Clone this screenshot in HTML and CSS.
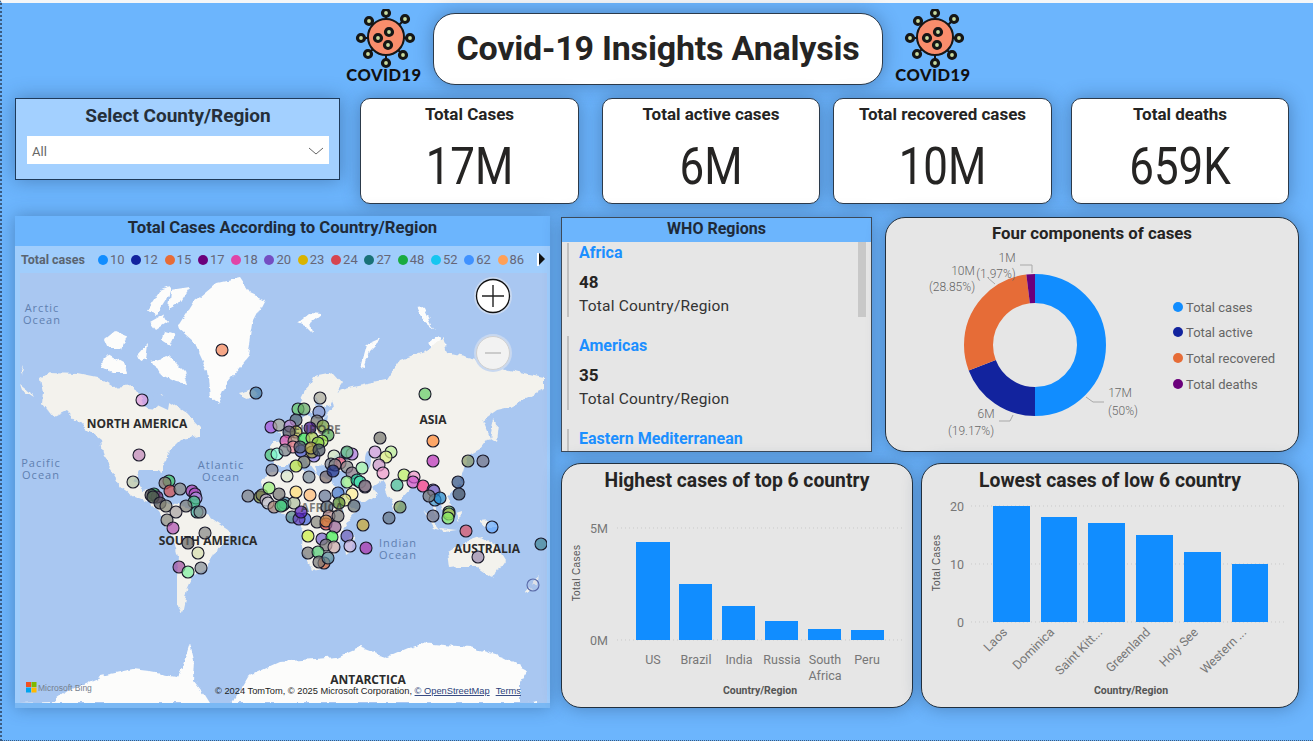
FILE: index.html
```html
<!DOCTYPE html>
<html lang="en">
<head>
<meta charset="utf-8">
<title>Covid-19 Insights Analysis</title>
<link rel="stylesheet" href="styles.css">
</head>
<body>
<svg class="defs" width="0" height="0" aria-hidden="true">
  <symbol id="virus" viewBox="0 0 66 62">
    <g class="v-stalk">
      <path d="M37 4V16M56 10L49 17M61 29H51M54 46L48 40M37 54V45M19 45L25 39M12 29H22M20 12L27 18"/>
    </g>
    <circle class="v-body" cx="37" cy="28" r="18"/>
    <g class="v-ball">
      <circle cx="37" cy="4" r="3.500"/><circle cx="56" cy="10" r="3.500"/><circle cx="61" cy="29" r="3.500"/><circle cx="54" cy="46" r="3.500"/>
      <circle cx="37" cy="54" r="3.500"/><circle cx="19" cy="45" r="3.500"/><circle cx="12" cy="29" r="3.500"/><circle cx="20" cy="12" r="3.500"/>
      <circle cx="40" cy="23" r="3.500"/><circle cx="29" cy="29" r="3.500"/><circle cx="39" cy="36" r="3.500"/>
    </g>
  </symbol>
  <filter id="coast" x="-5%" y="-5%" width="110%" height="110%">
    <feTurbulence type="fractalNoise" baseFrequency="0.09" numOctaves="3" seed="7"/>
    <feDisplacementMap in="SourceGraphic" scale="7" xChannelSelector="R" yChannelSelector="G"/>
    <feGaussianBlur stdDeviation="0.35"/>
  </filter>
</svg>
<div class="page">
  <header class="header">
    <div class="logo"><svg class="logo-icon"><use href="#virus"/></svg><span class="logo-text">COVID19</span></div>
    <h1 class="title-box">Covid-19 Insights Analysis</h1>
    <div class="logo logo-right"><svg class="logo-icon"><use href="#virus"/></svg><span class="logo-text">COVID19</span></div>
  </header>

  <section class="kpi-row">
    <div class="slicer">
      <div class="slicer-title">Select County/Region</div>
      <div class="dropdown"><span>All</span>
        <svg class="chev" width="16" height="8" viewBox="0 0 16 8"><path d="M1 1L8 7L15 1"/></svg>
      </div>
    </div>
    <div class="kpi kpi-a"><div class="kpi-title">Total Cases</div><div class="kpi-value">17M</div></div>
    <div class="kpi kpi-b"><div class="kpi-title">Total active cases</div><div class="kpi-value">6M</div></div>
    <div class="kpi kpi-c"><div class="kpi-title">Total recovered cases</div><div class="kpi-value">10M</div></div>
    <div class="kpi kpi-d"><div class="kpi-title">Total deaths</div><div class="kpi-value">659K</div></div>
  </section>

  <section class="main-row">
    <div class="map-panel">
      <div class="map-title">Total Cases According to Country/Region</div>
      <div class="legend">
        <b class="legend-name">Total cases</b>
        <span class="lg"><i class="c1"></i>10</span><span class="lg"><i class="c2"></i>12</span><span class="lg"><i class="c3"></i>15</span><span class="lg"><i class="c4"></i>17</span><span class="lg"><i class="c5"></i>18</span><span class="lg"><i class="c6"></i>20</span><span class="lg"><i class="c7"></i>23</span><span class="lg"><i class="c8"></i>24</span><span class="lg"><i class="c9"></i>27</span><span class="lg"><i class="c10"></i>48</span><span class="lg"><i class="c11"></i>52</span><span class="lg"><i class="c12"></i>62</span><span class="lg"><i class="c13"></i>86</span>
        <span class="legend-next"></span>
      </div>
      <svg class="map" width="527" height="430" viewBox="20 273 527 430">
        <rect class="ocean" x="20" y="273" width="527" height="430"/>
        <g class="ice" filter="url(#coast)">
          <path d="M178 327L193 303L217 283L240 278L250 293L265 300L253 323L248 357L227 383L218 403L210 397L207 370L193 340Z"/>
          <path d="M20 703L53 702L70 690L100 677L133 670L150 672L177 677L183 665L190 643L194 660L193 680L205 695L210 703Z"/>
          <path d="M232 703L247 677L280 662L303 660L337 657L360 647L387 657L420 643L470 647L503 657L528 670L520 683L520 703Z"/>
          <path d="M527 703L538 701L538 703Z"/>
          <path d="M298 322L308 314L320 315L311 322L313 333L305 325Z"/>
          <path d="M360 367L366 345L382 338L370 350L364 368Z"/>
          <path d="M417 307L423 306L432 325L436 330L424 320ZM427 342L436 335L447 345L436 349Z"/>
          <path d="M147 310L160 290L170 286L166 300L156 316ZM170 290L190 287L180 303L168 310ZM150 322L164 314L168 322L156 330Z"/>
          <path d="M104 340L115 331L127 336L122 349L108 349ZM100 362L108 354L124 363L127 372L112 372L102 367Z"/>
          <path d="M152 360L168 356L184 372L188 384L176 382L160 374ZM136 356L148 343L146 360L139 362ZM165 332L175 335L170 345L162 340Z"/>
        </g>
        <g class="land" filter="url(#coast)">
          <path d="M42 403L43 393L40 378L50 372L77 373L97 377L113 387L133 385L140 395L147 407L157 408L160 396L170 402L187 413L200 427L200 437L180 440L170 450L163 467L163 473L157 470L140 470L133 483L143 490L150 489L147 497L165 510L160 512L150 503L135 497L122 488L113 473L103 457L100 440L83 427L67 410L53 417Z"/>
          <path d="M157 503L177 505L200 510L217 522L232 532L223 545L213 553L207 568L193 577L187 590L182 613L177 603L177 577L178 557L173 537L163 523Z"/>
          <path d="M270 450L274 442L287 441L286 432L297 424L306 416L320 420L328 412L334 405L330 395L342 390L353 387L387 380L400 360L427 350L443 337L447 353L477 360L510 370L544 377L544 390L523 400L510 407L497 410L483 420L490 437L480 450L467 457L463 473L457 487L448 497L452 507L443 510L440 500L434 498L437 514L442 522L434 510L428 495L420 490L412 487L403 497L396 512L388 495L382 480L372 487L378 494L365 503L352 500L345 482L350 470L337 470L325 465L315 466L318 476L305 458L296 462L287 465L275 465L270 458Z"/>
          <path d="M300 403L313 377L333 373L342 383L336 392L330 405L322 408L317 395L312 413L303 414Z"/>
          <path d="M260 480L273 473L300 470L323 477L337 487L345 502L357 510L340 533L337 550L323 568L312 570L302 547L303 530L297 517L277 513L263 490Z"/>
          <path d="M350 537L355 535L352 552L346 556L345 547Z"/>
          <path d="M448 552L463 543L480 537L497 547L505 560L493 578L477 567L457 567L450 568Z"/>
          <path d="M480 522L490 521L497 527L486 527Z"/>
          <path d="M423 510L430 517L440 530L434 528ZM445 510L452 512L451 522L444 520ZM440 528L458 530L444 532ZM455 513L461 511L460 522Z"/>
          <path d="M525 593L530 587L533 590ZM532 583L540 576L536 586Z"/>
          <path d="M490 437L494 420L498 425L496 441ZM458 485L461 476L463 485Z"/>
          <path d="M284 437L290 424L296 430L294 440ZM278 432L283 430L282 438Z"/>
          <path d="M240 392L252 389L258 395L246 398Z"/>
          <path d="M20 372L23 365L22 376ZM20 384L30 392L33 397L22 390Z"/>
        </g>
        <g class="seas">
          <ellipse cx="342" cy="457" rx="8" ry="3.500"/>
          <ellipse cx="368" cy="460" rx="3" ry="9"/>
          <path d="M152 392L170 398L168 410L155 404Z"/>
          <path d="M318 424L328 415L326 428Z"/>
        </g>
        <g class="ocean-lb">
          <text x="42" y="312">Arctic</text><text x="42" y="324">Ocean</text>
          <text x="41" y="467">Pacific</text><text x="41" y="479">Ocean</text>
          <text x="221" y="469">Atlantic</text><text x="221" y="481">Ocean</text>
          <text x="398" y="547">Indian</text><text x="398" y="559">Ocean</text>
        </g>
        <g class="land-lb">
          <text x="137" y="428">NORTH AMERICA</text>
          <text x="433" y="424">ASIA</text>
          <text x="208" y="545">SOUTH AMERICA</text>
          <text x="487" y="553">AUSTRALIA</text>
          <text x="368" y="684">ANTARCTICA</text>
        </g>
        <g class="dots">
          <circle cx="222" cy="350" fill="#f4865a"/><circle cx="256" cy="393" fill="#4a7fa8"/><circle cx="142" cy="400" fill="#dd99dd"/><circle cx="139" cy="455" fill="#c088b8"/><circle cx="133" cy="482" fill="#b5c4a8"/>
          <circle cx="169" cy="481" fill="#3fc060"/><circle cx="165" cy="483" fill="#8a7a6a"/><circle cx="170" cy="491" fill="#d05050"/><circle cx="180" cy="489" fill="#888880"/>
          <circle cx="192" cy="491" fill="#b040b0"/><circle cx="195" cy="494" fill="#b050c0"/><circle cx="196" cy="498" fill="#b090e0"/><circle cx="194" cy="502" fill="#40c080"/><circle cx="197" cy="512" fill="#3cb0a0"/><circle cx="200" cy="512" fill="#889090"/><circle cx="186" cy="506" fill="#808078"/>
          <circle cx="154" cy="494" fill="#30c050"/><circle cx="157" cy="497" fill="#773377"/><circle cx="151" cy="495" fill="#444444"/><circle cx="153" cy="497" fill="#556655"/><circle cx="160" cy="503" fill="#555555"/><circle cx="166" cy="506" fill="#888877"/><circle cx="176" cy="512" fill="#aaa4a4"/>
          <circle cx="167" cy="520" fill="#888880"/><circle cx="173" cy="528" fill="#b050b0"/><circle cx="205" cy="533" fill="#888888"/><circle cx="188" cy="543" fill="#666666"/><circle cx="198" cy="553" fill="#d8dfb0"/><circle cx="179" cy="567" fill="#a050a0"/><circle cx="188" cy="572" fill="#80f0a0"/><circle cx="201" cy="568" fill="#889098"/>
          <circle cx="425" cy="394" fill="#66cc66"/><circle cx="433" cy="441" fill="#ff8833"/><circle cx="433" cy="461" fill="#bb33bb"/><circle cx="468" cy="461" fill="#889966"/><circle cx="483" cy="461" fill="#777788"/><circle cx="380" cy="438" fill="#777770"/><circle cx="375" cy="452" fill="#cc99dd"/><circle cx="391" cy="452" fill="#bbee99"/><circle cx="386" cy="457" fill="#ddee88"/><circle cx="379" cy="465" fill="#cc99cc"/><circle cx="383" cy="473" fill="#ee99cc"/><circle cx="404" cy="475" fill="#bbee66"/><circle cx="414" cy="477" fill="#ee99cc"/><circle cx="413" cy="482" fill="#cc55cc"/><circle cx="423" cy="486" fill="#ee3388"/><circle cx="397" cy="485" fill="#44bb99"/><circle cx="433" cy="490" fill="#8877cc"/><circle cx="458" cy="482" fill="#335588"/>
          <circle cx="320" cy="398" fill="#aaaa9c"/><circle cx="298" cy="409" fill="#66cc66"/><circle cx="304" cy="409" fill="#66aa66"/><circle cx="319" cy="412" fill="#8899cc"/><circle cx="296" cy="420" fill="#556670"/><circle cx="317" cy="421" fill="#777770"/><circle cx="271" cy="427" fill="#aa55dd"/><circle cx="279" cy="425" fill="#aaaa99"/><circle cx="290" cy="426" fill="#bb88cc"/><circle cx="323" cy="426" fill="#88aa44"/><circle cx="296" cy="432" fill="#bbbb44"/><circle cx="289" cy="432" fill="#555560"/><circle cx="310" cy="428" fill="#441188"/><circle cx="328" cy="435" fill="#55aa55"/><circle cx="322" cy="441" fill="#aaee55"/><circle cx="286" cy="441" fill="#dd55aa"/><circle cx="294" cy="441" fill="#aa8877"/><circle cx="304" cy="439" fill="#33dd55"/><circle cx="312" cy="438" fill="#aacc55"/><circle cx="318" cy="443" fill="#88cc44"/><circle cx="293" cy="447" fill="#ee8899"/><circle cx="301" cy="451" fill="#4455cc"/><circle cx="300" cy="447" fill="#556070"/><circle cx="314" cy="456" fill="#8877ee"/><circle cx="312" cy="452" fill="#999933"/><circle cx="311" cy="448" fill="#aaa044"/><circle cx="319" cy="450" fill="#445060"/><circle cx="271" cy="455" fill="#55cc77"/><circle cx="277" cy="454" fill="#88ffdd"/><circle cx="285" cy="450" fill="#778088"/><circle cx="304" cy="462" fill="#777766"/><circle cx="296" cy="466" fill="#ccee44"/><circle cx="272" cy="470" fill="#888890"/><circle cx="287" cy="476" fill="#dde8cc"/><circle cx="309" cy="477" fill="#778899"/><circle cx="326" cy="477" fill="#776666"/>
          <circle cx="334" cy="456" fill="#cde2c0"/><circle cx="347" cy="453" fill="#4477cc"/><circle cx="352" cy="454" fill="#aa77dd"/><circle cx="347" cy="452" fill="#77cc88"/><circle cx="331" cy="464" fill="#778090"/><circle cx="340" cy="463" fill="#ee5577"/><circle cx="335" cy="465" fill="#888888"/><circle cx="333" cy="471" fill="#223388"/><circle cx="347" cy="467" fill="#888888"/><circle cx="352" cy="473" fill="#887788"/><circle cx="362" cy="468" fill="#99eeaa"/><circle cx="347" cy="482" fill="#99ee88"/><circle cx="357" cy="480" fill="#22cc99"/><circle cx="360" cy="482" fill="#44ddaa"/><circle cx="365" cy="487" fill="#887788"/>
          <circle cx="248" cy="496" fill="#888888"/><circle cx="260" cy="497" fill="#8a9a30"/><circle cx="262" cy="495" fill="#777755"/><circle cx="266" cy="500" fill="#ccbbdd"/><circle cx="268" cy="503" fill="#cccccc"/><circle cx="274" cy="507" fill="#aa8877"/><circle cx="285" cy="503" fill="#4488aa"/><circle cx="283" cy="505" fill="#40b080"/><circle cx="281" cy="506" fill="#50d080"/><circle cx="279" cy="494" fill="#777777"/><circle cx="294" cy="503" fill="#b0c0a0"/><circle cx="269" cy="488" fill="#99ee77"/><circle cx="296" cy="492" fill="#ffdd77"/><circle cx="310" cy="495" fill="#ffbb77"/><circle cx="325" cy="496" fill="#667799"/><circle cx="338" cy="493" fill="#4477cc"/><circle cx="352" cy="494" fill="#ffee99"/><circle cx="345" cy="500" fill="#eef088"/><circle cx="339" cy="503" fill="#558833"/><circle cx="354" cy="506" fill="#667070"/><circle cx="365" cy="486" fill="#887788"/><circle cx="327" cy="507" fill="#556677"/>
          <circle cx="292" cy="517" fill="#558888"/><circle cx="305" cy="519" fill="#4466dd"/><circle cx="299" cy="519" fill="#6644bb"/><circle cx="301" cy="512" fill="#5522bb"/><circle cx="317" cy="522" fill="#888880"/><circle cx="329" cy="516" fill="#bb9090"/><circle cx="326" cy="524" fill="#e04040"/><circle cx="326" cy="521" fill="#cc8844"/><circle cx="338" cy="516" fill="#777777"/><circle cx="335" cy="527" fill="#996699"/><circle cx="363" cy="525" fill="#ccaa33"/><circle cx="389" cy="518" fill="#667788"/><circle cx="400" cy="507" fill="#779955"/>
          <circle cx="308" cy="536" fill="#ccee44"/><circle cx="322" cy="539" fill="#7766cc"/><circle cx="332" cy="537" fill="#44ee55"/><circle cx="326" cy="545" fill="#777777"/><circle cx="334" cy="547" fill="#ccaaaa"/><circle cx="347" cy="536" fill="#7766bb"/><circle cx="350" cy="546" fill="#bbaadd"/><circle cx="366" cy="548" fill="#aa33aa"/><circle cx="308" cy="553" fill="#777777"/><circle cx="318" cy="552" fill="#55cc77"/><circle cx="324" cy="563" fill="#dd6633"/><circle cx="319" cy="562" fill="#777777"/><circle cx="328" cy="558" fill="#558899"/>
          <circle cx="434" cy="491" fill="#8877cc"/><circle cx="435" cy="500" fill="#4499cc"/><circle cx="440" cy="498" fill="#2288cc"/><circle cx="429" cy="496" fill="#777777"/><circle cx="459" cy="494" fill="#445060"/><circle cx="433" cy="516" fill="#777788"/><circle cx="449" cy="512" fill="#66cc66"/><circle cx="449" cy="514" fill="#aabb55"/><circle cx="448" cy="518" fill="#88ee66"/><circle cx="466" cy="531" fill="#dd5566"/><circle cx="492" cy="527" fill="#66aaff"/><circle cx="541" cy="544" fill="#448899"/><circle cx="478" cy="557" fill="#9988aa"/><circle class="dot-faint" cx="533" cy="585" fill="#aabbdd"/>
        </g>
        <g class="land-lb land-through">
          <text x="317" y="434">EUROPE</text>
          <text x="322" y="512">AFRICA</text>
        </g>
        <g class="zoom-ctl">
          <circle class="halo" cx="493" cy="296" r="19"/><circle class="btn" cx="493" cy="296" r="16.500"/><path class="plus" d="M482 296H504M493 285V307"/>
          <circle class="halo" cx="493" cy="353" r="19"/><circle class="btn-off" cx="493" cy="353" r="16.500"/><path class="minus" d="M485 353H501"/>
        </g>
        <g>
          <rect x="26" y="682" width="5" height="5" fill="#f25022"/><rect x="31.500" y="682" width="5" height="5" fill="#7fba00"/><rect x="26" y="687.500" width="5" height="5" fill="#00a4ef"/><rect x="31.500" y="687.500" width="5" height="5" fill="#ffb900"/>
          <text class="bing" x="38" y="691">Microsoft Bing</text>
          <text class="copy" x="215" y="694">© 2024 TomTom, © 2025 Microsoft Corporation, <tspan class="copy-link">© OpenStreetMap</tspan><tspan class="copy-link" dx="6">Terms</tspan></text>
        </g>
      </svg>
    </div>

    <div class="right-col">
      <div class="right-top">
        <div class="who">
          <div class="who-title">WHO Regions</div>
          <div class="who-body">
            <div class="who-item"><div class="who-name">Africa</div><div class="who-val">48</div><div class="who-lab">Total Country/Region</div></div>
            <div class="who-item"><div class="who-name">Americas</div><div class="who-val">35</div><div class="who-lab">Total Country/Region</div></div>
            <div class="who-item"><div class="who-name">Eastern Mediterranean</div></div>
            <div class="who-scroll"></div>
          </div>
        </div>
        <div class="card donut-card">
          <div class="card-title donut-title">Four components of cases</div>
          <svg class="chart" width="414" height="207" viewBox="885 245 414 207">
            <g class="donut">
              <circle pathLength="100" cx="1035" cy="345" r="56.500" stroke="#118dff" stroke-dasharray="50 50" stroke-dashoffset="0"/>
              <circle pathLength="100" cx="1035" cy="345" r="56.500" stroke="#12239e" stroke-dasharray="19.170 80.830" stroke-dashoffset="-50"/>
              <circle pathLength="100" cx="1035" cy="345" r="56.500" stroke="#e66c37" stroke-dasharray="28.860 71.140" stroke-dashoffset="-69.170"/>
              <circle pathLength="100" cx="1035" cy="345" r="56.500" stroke="#6b007b" stroke-dasharray="1.970 98.030" stroke-dashoffset="-98.030"/>
            </g>
            <path class="leader" d="M1020 265H1032V273M988 278L995 284M1086 397L1093 402H1104M999 421H1010L1013 415"/>
            <g class="donut-lb">
              <text x="1007" y="262">1M</text><text x="996" y="278">(1.97%)</text>
              <text x="963" y="275">10M</text><text x="952" y="291">(28.85%)</text>
              <text x="1120" y="397">17M</text><text x="1123" y="415">(50%)</text>
              <text x="986" y="418">6M</text><text x="971" y="435">(19.17%)</text>
            </g>
            <g class="donut-leg">
              <circle cx="1178" cy="307" r="5" fill="#118dff"/><text x="1186" y="312">Total cases</text>
              <circle cx="1178" cy="332" r="5" fill="#12239e"/><text x="1186" y="337">Total active</text>
              <circle cx="1178" cy="358" r="5" fill="#e66c37"/><text x="1186" y="363">Total recovered</text>
              <circle cx="1178" cy="384" r="5" fill="#6b007b"/><text x="1186" y="389">Total deaths</text>
            </g>
          </svg>
        </div>
      </div>
      <div class="right-bottom">
        <div class="card bar-a">
          <div class="card-title bar-title">Highest cases of top 6 country</div>
          <svg class="chart" width="352" height="209" viewBox="561 499 352 209">
            <path class="grid" d="M617 528H902M617 640H902"/>
            <g class="axis-lb end"><text x="608" y="533">5M</text><text x="608" y="645">0M</text></g>
            <g class="bars">
              <rect x="636" y="542" width="34" height="98"/><rect x="679" y="584" width="33" height="56"/><rect x="722" y="606" width="33" height="34"/><rect x="765" y="621" width="33" height="19"/><rect x="808" y="629" width="33" height="11"/><rect x="851" y="630" width="33" height="10"/>
            </g>
            <g class="axis-lb mid">
              <text x="653" y="664">US</text><text x="696" y="664">Brazil</text><text x="739" y="664">India</text><text x="782" y="664">Russia</text><text x="825" y="664">South</text><text x="825" y="680">Africa</text><text x="867" y="664">Peru</text>
            </g>
            <text class="y-title" transform="translate(580 573) rotate(-90)">Total Cases</text>
            <text class="x-title" x="760" y="694">Country/Region</text>
          </svg>
        </div>
        <div class="card bar-b">
          <div class="card-title bar-title">Lowest cases of low 6 country</div>
          <svg class="chart" width="378" height="209" viewBox="921 499 378 209">
            <path class="grid" d="M971 506H1287M971 564H1287M971 622H1287"/>
            <g class="axis-lb end"><text x="964" y="511">20</text><text x="964" y="569">10</text><text x="964" y="627">0</text></g>
            <g class="bars">
              <rect x="993" y="506" width="37" height="116"/><rect x="1041" y="517" width="36" height="105"/><rect x="1088" y="523" width="37" height="99"/><rect x="1136" y="535" width="37" height="87"/><rect x="1184" y="552" width="37" height="70"/><rect x="1232" y="564" width="36" height="58"/>
            </g>
            <g class="axis-lb end">
              <text transform="translate(1008 633) rotate(-45)">Laos</text>
              <text transform="translate(1055 633) rotate(-45)">Dominica</text>
              <text transform="translate(1103 633) rotate(-45)">Saint Kitt...</text>
              <text transform="translate(1151 633) rotate(-45)">Greenland</text>
              <text transform="translate(1199 633) rotate(-45)">Holy See</text>
              <text transform="translate(1247 633) rotate(-45)">Western ...</text>
            </g>
            <text class="y-title" transform="translate(940 563) rotate(-90)">Total Cases</text>
            <text class="x-title" x="1131" y="694">Country/Region</text>
          </svg>
        </div>
      </div>
    </div>
  </section>
</div>
</body>
</html>
```
FILE: styles.css
```css
* { box-sizing: border-box; }
html, body { margin: 0; padding: 0; }
body { width: 1313px; height: 741px; overflow: hidden; font-family: "Roboto", "Noto Sans", sans-serif; color: #252423; }
.defs { position: absolute; }
.page { width: 1313px; height: 741px; background: #6cb5fd; border-top: 3px solid #f4f6f8; border-left: 2px dotted #3b5b80; border-bottom: 1px dotted #3b5b80; padding: 10px 0 0 13px; }

.header { display: flex; height: 72px; align-items: center; margin-left: 332px; }
.logo { width: 74px; height: 72px; display: flex; flex-direction: column; align-items: center; flex: none; margin-top: -1px; }
.logo-icon { width: 66px; height: 62px; flex: none; margin: -4px 0 0 -4px; }
.logo-text { font-family: "Lato", sans-serif; font-weight: 900; font-size: 16.500px; line-height: 16px; letter-spacing: .5px; margin-top: -4px; color: #111; white-space: nowrap; }
.logo-right { margin-left: 13px; }
.title-box { width: 450px; height: 72px; margin: 0 0 0 12px; padding-bottom: 3px; flex: none; background: #fff; border: 1px solid #2c3a4a; border-radius: 22px; box-shadow: 0 0 18px rgba(30,60,100,.42); display: flex; align-items: center; justify-content: center; font-size: 34px; font-weight: 700; letter-spacing: -.2px; color: #252423; }

.v-stalk path { fill: none; stroke: #161616; stroke-width: 2; }
.v-body { fill: #f98d6c; stroke: #161616; stroke-width: 2; }
.v-ball circle { fill: #c8dba0; stroke: #161616; stroke-width: 3.200; }

.kpi-row { display: flex; align-items: flex-start; height: 106px; margin-top: 13px; }
.slicer { width: 325px; height: 82px; background: #a3d0ff; border: 1px solid #1e3a5a; box-shadow: 0 0 18px rgba(30,60,100,.42); padding: 0 10px 0 11px; flex: none; }
.slicer-title { text-align: center; font-weight: 700; font-size: 19px; line-height: 23px; margin-top: 5px; color: #252f3a; }
.dropdown { height: 28px; background: #fff; margin-top: 9px; display: flex; align-items: center; justify-content: space-between; padding: 2px 5px 0; font-size: 13px; color: #666; }
.chev { fill: none; stroke: #666; stroke-width: 1; }
.kpi { height: 106px; background: #fff; border: 1px solid #2c3a4a; border-radius: 10px; box-shadow: 0 0 18px rgba(30,60,100,.42); text-align: center; flex: none; }
.kpi-a { width: 219px; margin-left: 20px; }
.kpi-b { width: 218px; margin-left: 23px; }
.kpi-c { width: 219px; margin-left: 13px; }
.kpi-d { width: 218px; margin-left: 19px; }
.kpi-title { font-size: 17px; font-weight: 700; line-height: 20px; margin-top: 5px; color: #252423; }
.kpi-value { font-size: 51px; line-height: 60px; margin-top: 13px; color: #252423; font-weight: 400; transform: scaleX(.86); }

.main-row { display: flex; align-items: flex-start; margin-top: 12px; }
.map-panel { width: 535px; height: 492px; background: #a0cdfc; box-shadow: 0 0 16px rgba(30,60,100,.38); border-bottom: 5px solid #7ab8f4; flex: none; display: flex; flex-direction: column; }
.map-title { height: 30px; background: #6cb5fd; text-align: center; font-weight: 700; font-size: 16.700px; line-height: 23px; color: #1f2a38; }
.legend { height: 27px; display: flex; align-items: center; padding-left: 6px; font-size: 13px; color: #667; }
.legend-name { font-weight: 700; font-size: 12.500px; width: 77px; color: #5a6470; flex: none; }
.lg { width: 33.300px; display: flex; align-items: center; gap: 2px; flex: none; }
.lg i { width: 10px; height: 10px; border-radius: 50%; flex: none; }
.c1 { background: #118dff; } .c2 { background: #12239e; } .c3 { background: #e66c37; } .c4 { background: #6b007b; } .c5 { background: #e044a7; } .c6 { background: #744ec2; } .c7 { background: #d9b300; } .c8 { background: #d64550; } .c9 { background: #197278; } .c10 { background: #1aab40; } .c11 { background: #15c6f0; } .c12 { background: #4092ff; } .c13 { background: #ffa058; }
.legend-next { margin-left: 6px; width: 8px; height: 13px; border-left: 2px solid #fff; position: relative; }
.legend-next::after { content: ""; position: absolute; left: 0; top: 0; border-left: 6px solid #111; border-top: 6.500px solid transparent; border-bottom: 6.500px solid transparent; }
.map { display: block; margin-left: 5px; flex: none; }
.ocean { fill: #a9c7f1; }
.land path { fill: #f3f2ed; }
.ice path { fill: #fcfcfb; }
.seas ellipse, .seas path { fill: #a9c7f1; }
.ocean-lb text { fill: #5f7fb0; font: 11px "Open Sans", sans-serif; letter-spacing: 1px; text-anchor: middle; }
.land-lb text { fill: #2b2b2b; font: 700 12px "Open Sans", sans-serif; text-anchor: middle; }
.land-through text { fill-opacity: .6; }
.dots circle { r: 6px; fill-opacity: .72; stroke: #1a1a2a; stroke-width: 1.100; }
.dots .dot-faint { fill-opacity: .3; stroke: #5a6aa8; }
.halo { fill: #c8d8f0; }
.btn { fill: #fff; stroke: #111; stroke-width: 1.300; }
.btn-off { fill: #f2f2f2; stroke: #d0d0d0; stroke-width: 1; }
.plus { fill: none; stroke: #222; stroke-width: 1.400; }
.minus { fill: none; stroke: #bbb; stroke-width: 1.400; }
.bing { font: 8.500px "Liberation Sans", sans-serif; fill: #75808e; }
.copy { font: 9.300px "Liberation Sans", sans-serif; fill: #222; }
.copy-link { fill: #2b3f7a; text-decoration: underline; }

.right-col { margin-left: 11px; margin-top: 1px; display: flex; flex-direction: column; gap: 11px; flex: none; width: 738px; }
.right-top { display: flex; gap: 13px; height: 235px; }
.right-bottom { display: flex; gap: 8px; height: 245px; }
.who { width: 311px; background: #e6e6e6; border: 1px solid #3c4a5a; box-shadow: 0 0 16px rgba(30,60,100,.38); display: flex; flex-direction: column; flex: none; }
.who-title { height: 24px; background: #6cb5fd; text-align: center; font-weight: 700; font-size: 16px; line-height: 22px; color: #1f2a38; flex: none; }
.who-body { position: relative; overflow: hidden; flex: 1; padding: 1px 0 0 5px; }
.who-item { height: 74px; margin-bottom: 19px; border-left: 2px solid #c0c0c0; padding-left: 10px; }
.who-name { color: #1c8fff; font-size: 16px; font-weight: 700; line-height: 20px; }
.who-val { font-size: 17px; font-weight: 700; line-height: 20px; margin-top: 9px; color: #252423; }
.who-lab { font-size: 15.500px; letter-spacing: .2px; line-height: 20px; margin-top: 4px; color: #333; }
.who-scroll { position: absolute; right: 5px; top: 0; width: 8px; height: 75px; background: #c8c8c8; }

.card { background: #e6e6e6; border: 1px solid #22303e; border-radius: 20px; box-shadow: 0 0 18px rgba(30,60,100,.42); flex: none; display: flex; flex-direction: column; }
.donut-card { width: 414px; }
.bar-a { width: 352px; }
.bar-b { width: 378px; }
.card-title { text-align: center; font-weight: 700; color: #252423; flex: none; }
.donut-title { font-size: 16.800px; height: 27px; line-height: 31px; }
.bar-title { font-size: 19.300px; height: 35px; line-height: 33px; }
.chart { display: block; flex: none; margin: 0 -1px; }
.donut circle { fill: none; stroke-width: 29; transform: rotate(-90deg); transform-origin: 1035px 345px; }
.leader { fill: none; stroke: #a8a8a8; stroke-width: 1; }
.donut-lb text { font-size: 12px; font-weight: 300; fill: #666; text-anchor: middle; }
.donut-leg text { font-size: 13px; fill: #666; }
.grid { fill: none; stroke: #c9c9c9; stroke-width: 1; stroke-dasharray: 1 3; }
.bars rect { fill: #118dff; }
.axis-lb text { font-size: 12.500px; fill: #777; }
.end text { text-anchor: end; }
.mid text { text-anchor: middle; }
.y-title { font: 10px "Liberation Sans", sans-serif; letter-spacing: .4px; fill: #555; text-anchor: middle; }
.x-title { font-size: 10.500px; font-weight: 700; fill: #555; text-anchor: middle; }
```
